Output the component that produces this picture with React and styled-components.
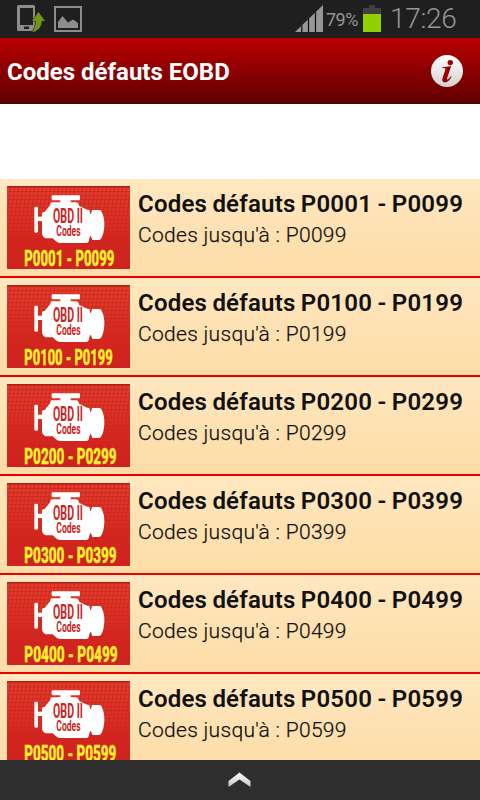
import React from 'react';
import styled, { createGlobalStyle } from 'styled-components';

const GlobalStyle = createGlobalStyle`
  * {
    box-sizing: border-box;
  }
  body {
    margin: 0;
    background: #fff;
    font-family: Roboto, 'Liberation Sans', sans-serif;
  }
`;

const Screen = styled.div`
  display: flex;
  flex-direction: column;
  width: 480px;
  height: 800px;
  overflow: hidden;
  background: #fff;
`;

const StatusBar = styled.div`
  display: flex;
  flex: none;
  justify-content: space-between;
  height: 38px;
  padding: 0 24px 0 17px;
  background: #1f1f1f;
  color: #969696;
`;

const StatusGroup = styled.div`
  display: flex;
  align-items: flex-start;
`;

const StatusIcon = styled.svg`
  display: block;
  flex: none;
  margin: 5px ${({ $gap }) => $gap || 0}px 0 0;
`;

const BatteryLevel = styled.span`
  width: 37px;
  font-size: 18px;
  line-height: 38px;
  font-weight: 400;
  letter-spacing: -0.5px;
  padding-top: 1px;
`;

const Clock = styled.span`
  width: 66px;
  font-size: 28px;
  line-height: 37px;
  font-weight: 300;
  letter-spacing: -0.3px;
  white-space: nowrap;
`;

const Header = styled.header`
  display: flex;
  flex: none;
  align-items: center;
  justify-content: space-between;
  height: 66px;
  padding: 0 17px 0 7px;
  background: linear-gradient(#b80000, #610000);
  border-bottom: 1px solid #4e0000;
`;

const HeaderTitle = styled.h1`
  margin: 2px 0 0;
  color: #fff;
  font-size: 24px;
  line-height: 30px;
  font-weight: 700;
  letter-spacing: 0;
`;

const AdSpace = styled.div`
  flex: none;
  height: 75px;
`;

const List = styled.div`
  flex: 1;
  min-height: 0;
  overflow: hidden;
`;

const Row = styled.div`
  display: flex;
  height: 99px;
  padding: 7px 0 0 7px;
  background: linear-gradient(#ffe7c0, #fddca6);
  border-bottom: 2px solid #e60000;
`;

const Thumb = styled.svg`
  display: block;
  flex: none;
  width: 123px;
  height: 83px;
  margin-right: 8px;
  overflow: visible;
`;

const RowText = styled.div`
  padding-top: 1px;
  color: #111;
  white-space: nowrap;
`;

const RowTitle = styled.div`
  font-size: 24px;
  line-height: 34px;
  font-weight: 600;
  letter-spacing: 0.2px;
  word-spacing: -0.8px;
`;

const RowSubtitle = styled.div`
  font-size: 21px;
  line-height: 28px;
  font-weight: 300;
  letter-spacing: 0.3px;
  -webkit-text-stroke: 0.25px #111;
`;

const BottomBar = styled.div`
  display: flex;
  flex: none;
  align-items: center;
  justify-content: center;
  height: 40px;
  background: #2e2e2e;
`;

const ranges = [
  { from: 'P0001', to: 'P0099', width: 270 },
  { from: 'P0100', to: 'P0199', width: 265 },
  { from: 'P0200', to: 'P0299', width: 277 },
  { from: 'P0300', to: 'P0399', width: 277 },
  { from: 'P0400', to: 'P0499', width: 280 },
  { from: 'P0500', to: 'P0599', width: 276 },
];

// Condensed label: the glyphs are stretched vertically and fitted to a width
const FittedText = ({ x, y, size, width, stretch, color, weight, outline, children }) => (
  <text
    transform={`translate(${x} ${y}) scale(1 ${stretch})`}
    fontFamily="Roboto, 'Liberation Sans', sans-serif"
    fontSize={size}
    fontWeight={weight}
    textLength={width}
    lengthAdjust="spacingAndGlyphs"
    fill={color}
    stroke={color}
    strokeWidth={outline}
  >
    {children}
  </text>
);

const EngineThumb = ({ from, to, width }) => (
  <Thumb viewBox="21 33 369 249">
    <defs>
      <linearGradient id={`bg${from}`} x1="0" y1="0" x2="0" y2="1">
        <stop offset="0" stopColor="#e6402f" />
        <stop offset="0.65" stopColor="#d3271f" />
        <stop offset="1" stopColor="#ce2220" />
      </linearGradient>
      <linearGradient id={`fade${from}`} x1="0" y1="0" x2="0" y2="1">
        <stop offset="0" stopColor="#fff" />
        <stop offset="0.85" stopColor="#000" />
      </linearGradient>
      <pattern
        id={`mesh${from}`}
        width="12"
        height="12"
        patternUnits="userSpaceOnUse"
        patternTransform="skewX(-8)"
      >
        <path d="M0 1.5H12M1.5 0V12" stroke="#b81a15" strokeWidth="3" />
      </pattern>
      <mask id={`mask${from}`}>
        <rect x="21" y="33" width="369" height="249" fill={`url(#fade${from})`} />
      </mask>
    </defs>
    <rect x="21" y="33" width="369" height="249" fill={`url(#bg${from})`} />
    <rect
      x="21"
      y="33"
      width="369"
      height="249"
      fill={`url(#mesh${from})`}
      opacity="0.6"
      mask={`url(#mask${from})`}
    />
    <rect x="21" y="33" width="369" height="3" fill="#a91f16" />
    <g fill="#fff">
      <rect x="155" y="61" width="85" height="15" rx="3" />
      <rect x="181" y="72" width="31" height="14" />
      <rect x="103" y="95" width="11" height="78" rx="4" />
      <rect x="111" y="125" width="18" height="13" />
      <path d="M126 116Q126 111 131 111H134L151 90V86Q152 82 158 82H228Q235 82 237 92L258 103Q262 105 268 105L271 117H273L276 105H298Q303 105 305 110Q314 128 313 152Q312 175 304 190Q301 196 296 195H277L273 184H270L266 199Q265 204 260 204H180Q173 204 168 199L158 190H137Q132 189 129 184Q126 180 126 174Z" />
    </g>
    <FittedText x={159} y={145} size={40} width={90} stretch={1.45} weight="700" outline="0" color="#c9251f">
      OBD II
    </FittedText>
    <FittedText x={169} y={183} size={30} width={73} stretch={1.5} weight="700" outline="0" color="#c9251f">
      Codes
    </FittedText>
    <FittedText x={73} y={273} size={46} width={width} stretch={1.38} weight="800" outline="0.8" color="#fff22d">
      {`${from} - ${to}`}
    </FittedText>
  </Thumb>
);

const InfoIcon = () => (
  <svg width="32" height="32" viewBox="0 0 32 32">
    <defs>
      <linearGradient id="info" x1="0" y1="0" x2="0" y2="1">
        <stop offset="0" stopColor="#fff" />
        <stop offset="1" stopColor="#d2d2d2" />
      </linearGradient>
    </defs>
    <circle cx="16" cy="16" r="16" fill="url(#info)" />
    <circle cx="19.3" cy="7.6" r="2.7" fill="#9c0000" />
    <path
      d="M11.4 12.2Q15.5 12 20.2 11L16.1 23.2Q15.6 25.2 17 24.3Q18.5 23.4 19.9 21.2L20.7 21.8Q17.6 27.5 13.8 27.5Q10.3 27.2 11.6 23L14.4 14.5Q15 13.1 11.2 13.1Z"
      fill="#9c0000"
    />
  </svg>
);

const App = () => (
  <>
    <GlobalStyle />
    <Screen>
      <StatusBar>
        <StatusGroup>
          <StatusIcon width="28" height="28" viewBox="0 0 28 28" $gap={8}>
            <path
              fillRule="evenodd"
              d="M1.5 0H16.5Q18 0 18 1.5V24.5Q18 26 16.5 26H1.5Q0 26 0 24.5V1.5Q0 0 1.5 0ZM3 3V20H16V3ZM7 21.5V24H12V21.5Z"
              fill="#8d8d8d"
            />
            <path
              d="M21.5 7L28 16H24.8Q24.8 25 15 27.2Q18.8 22.5 18.8 16H15Z"
              fill="#6f9616"
              stroke="#1f1f1f"
              strokeWidth="1"
              paintOrder="stroke"
            />
          </StatusIcon>
          <StatusIcon width="30" height="28" viewBox="0 0 30 28">
            <rect x="2" y="2" width="26" height="24" fill="none" stroke="#8d8d8d" strokeWidth="2" />
            <path d="M5 23V17L9.5 11L15 17.5L20 14.5L25 18V23Z" fill="#8d8d8d" />
          </StatusIcon>
        </StatusGroup>
        <StatusGroup>
          <StatusIcon width="28" height="27" viewBox="0 0 28 27" $gap={3}>
            <path d="M0 27L28 0V27Z" fill="#969696" />
            <path d="M6.8 20.5V27M13.5 14V27M20.5 7.2V27" stroke="#0c0c0c" strokeWidth="1.2" />
          </StatusIcon>
          <BatteryLevel>79%</BatteryLevel>
          <StatusIcon width="18" height="27" viewBox="0 0 18 27" $gap={9}>
            <path d="M0 3H6V0H12V3H18V9H0Z" fill="#404040" />
            <rect y="9" width="18" height="18" fill="#91d000" />
          </StatusIcon>
          <Clock>17:26</Clock>
        </StatusGroup>
      </StatusBar>
      <Header>
        <HeaderTitle>Codes défauts EOBD</HeaderTitle>
        <InfoIcon />
      </Header>
      <AdSpace />
      <List>
        {ranges.map((range) => (
          <Row key={range.from}>
            <EngineThumb {...range} />
            <RowText>
              <RowTitle>
                Codes défauts {range.from} - {range.to}
              </RowTitle>
              <RowSubtitle>Codes jusqu'à : {range.to}</RowSubtitle>
            </RowText>
          </Row>
        ))}
      </List>
      <BottomBar>
        <svg width="24" height="16" viewBox="0 0 24 16">
          <defs>
            <linearGradient id="chevron" x1="0" y1="0" x2="0" y2="1">
              <stop offset="0" stopColor="#fff" />
              <stop offset="1" stopColor="#c4c4c4" />
            </linearGradient>
          </defs>
          <path d="M0.5 9L11.5 0.5L22.5 9V15L11.5 7.5L0.5 15Z" fill="url(#chevron)" />
        </svg>
      </BottomBar>
    </Screen>
  </>
);

export default App;
